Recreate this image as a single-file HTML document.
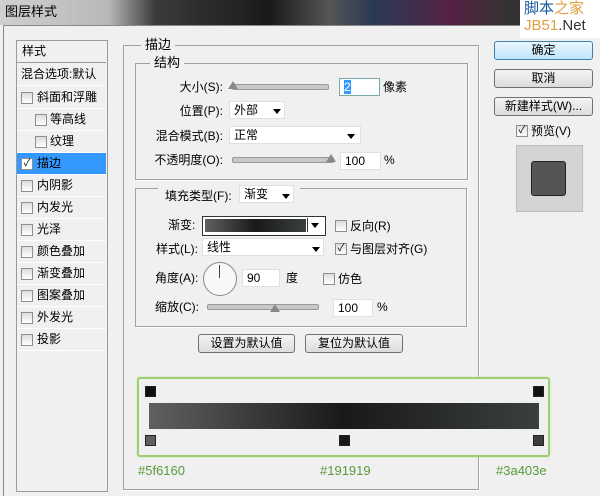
<!DOCTYPE html>
<html><head><meta charset="utf-8"><style>
body{margin:0;width:600px;height:495px;overflow:hidden;background:#f0f0f0;font-family:"Liberation Sans","Noto Sans CJK SC",sans-serif;font-size:12px;line-height:14px;color:#000;position:relative}
.a{position:absolute}
.cb{position:absolute;width:10px;height:10px;border:1px solid #8f8f8f;background:linear-gradient(#ddd,#fff)}
.row{position:absolute;left:17px;width:89px;height:21px;border-bottom:1px solid #fff;line-height:21px}
.grp{position:absolute;border:1px solid #a0a0a0;box-shadow:1px 1px 0 #fff}
.lg{position:absolute;background:#f0f0f0;padding:0 4px;line-height:14px;font-size:13px}
.in{position:absolute;background:#fff;border:1px solid #e0e0e0;height:18px;line-height:17px;padding-left:4px;box-sizing:border-box}
.btn{position:absolute;border:1px solid #707070;border-radius:3px;background:linear-gradient(#f4f4f4,#dcdcdc);text-align:center;line-height:16px;box-sizing:border-box}
.sl{position:absolute;height:4px;background:#c8c8c8;border:1px solid #999;border-radius:2px}
.th{position:absolute;width:0;height:0;border-left:5px solid transparent;border-right:5px solid transparent;border-bottom:8px solid #888}
.r{text-align:right}
.arr{position:absolute;width:0;height:0;border-left:4px solid transparent;border-right:4px solid transparent;border-top:5px solid #000}
.stop{position:absolute;width:9px;height:9px;background:#444;border:1px solid #222}
</style></head><body>
<div class="a" style="left:0;top:0;width:600px;height:25px;background:linear-gradient(90deg,#d0d0d0 0,#b8b8b8 18%,#3a3a3a 26%,#1a1a1a 45%,#555 55%,#2a3a55 62%,#552244 75%,#333 85%)"></div>
<div class="a" style="left:5px;top:5px;font-size:13px">图层样式</div>
<div class="a" style="left:520px;top:0;width:80px;height:38px;background:#fff;font-size:15px;line-height:17px;padding-left:4px;box-sizing:border-box"><span style="color:#1a5aa0">脚本</span><span style="color:#e0a040">之家</span><br><span style="color:#e0a040">JB51</span><span style="color:#333">.Net</span></div>
<div class="a" style="left:3px;top:25px;width:597px;height:470px;border-left:1px solid #888;border-top:1px solid #888;background:#f0f0f0;z-index:-1"></div>
<!-- left list -->
<div class="a" style="left:16px;top:40px;width:90px;height:450px;border:1px solid #9a9a9a;background:#f0f0f0"></div>
<div class="row" style="top:41px;padding-left:5px;width:84px;border-bottom:1px solid #999">样式</div>
<div class="row" style="top:64px;padding-left:4px;width:85px;white-space:nowrap;overflow:hidden">混合选项:默认</div>
<div class="row" style="top:87px"><div class="cb" style="left:4px;top:5px"></div><span class="a" style="left:20px">斜面和浮雕</span></div>
<div class="row" style="top:109px"><div class="cb" style="left:18px;top:5px"></div><span class="a" style="left:33px">等高线</span></div>
<div class="row" style="top:131px"><div class="cb" style="left:18px;top:5px"></div><span class="a" style="left:33px">纹理</span></div>
<div class="row" style="top:153px;background:#3399ff"><div class="cb" style="left:4px;top:5px;background:#fff;font-size:10px;line-height:10px;text-align:center">✓</div><span class="a" style="left:20px">描边</span></div>
<div class="row" style="top:175px"><div class="cb" style="left:4px;top:5px"></div><span class="a" style="left:20px">内阴影</span></div>
<div class="row" style="top:197px"><div class="cb" style="left:4px;top:5px"></div><span class="a" style="left:20px">内发光</span></div>
<div class="row" style="top:219px"><div class="cb" style="left:4px;top:5px"></div><span class="a" style="left:20px">光泽</span></div>
<div class="row" style="top:241px"><div class="cb" style="left:4px;top:5px"></div><span class="a" style="left:20px">颜色叠加</span></div>
<div class="row" style="top:263px"><div class="cb" style="left:4px;top:5px"></div><span class="a" style="left:20px">渐变叠加</span></div>
<div class="row" style="top:285px"><div class="cb" style="left:4px;top:5px"></div><span class="a" style="left:20px">图案叠加</span></div>
<div class="row" style="top:307px"><div class="cb" style="left:4px;top:5px"></div><span class="a" style="left:20px">外发光</span></div>
<div class="row" style="top:329px"><div class="cb" style="left:4px;top:5px"></div><span class="a" style="left:20px">投影</span></div>
<!-- groups -->
<div class="grp" style="left:123px;top:45px;width:354px;height:443px"></div>
<div class="lg" style="left:141px;top:38px">描边</div>
<div class="grp" style="left:135px;top:63px;width:331px;height:115px"></div>
<div class="lg" style="left:150px;top:56px">结构</div>
<div class="a r" style="left:140px;top:80px;width:83px">大小(S):</div>
<div class="sl" style="left:232px;top:84px;width:95px"></div><div class="th" style="left:228px;top:81px"></div>
<div class="in" style="left:339px;top:78px;width:41px;border-color:#7aa"><span style="background:#39f;color:#fff">2</span></div>
<div class="a" style="left:383px;top:80px">像素</div>
<div class="a r" style="left:140px;top:104px;width:83px">位置(P):</div>
<div class="in" style="left:229px;top:101px;width:56px">外部</div><div class="arr" style="left:273px;top:109px"></div>
<div class="a r" style="left:140px;top:129px;width:83px">混合模式(B):</div>
<div class="in" style="left:229px;top:126px;width:132px">正常</div><div class="arr" style="left:347px;top:134px"></div>
<div class="a r" style="left:140px;top:153px;width:83px">不透明度(O):</div>
<div class="sl" style="left:232px;top:157px;width:100px"></div><div class="th" style="left:326px;top:154px"></div>
<div class="in" style="left:340px;top:152px;width:41px">100</div>
<div class="a" style="left:384px;top:153px">%</div>
<div class="grp" style="left:135px;top:188px;width:330px;height:137px"></div>
<div class="a" style="left:158px;top:184px;width:142px;height:22px;background:#f0f0f0"></div>
<div class="a" style="left:165px;top:189px">填充类型(F):</div>
<div class="in" style="left:239px;top:185px;width:55px">渐变</div><div class="arr" style="left:282px;top:194px"></div>
<div class="a" style="left:168px;top:218px">渐变:</div>
<div class="a" style="left:202px;top:216px;width:122px;height:18px;border:1px solid #333;background:#fff"></div>
<div class="a" style="left:205px;top:219px;width:101px;height:13px;background:linear-gradient(90deg,#5f6160,#191919 50%,#3a403e)"></div>
<div class="a" style="left:307px;top:218px;width:15px;height:14px;border-left:1px solid #333"></div><div class="arr" style="left:311px;top:223px"></div>
<div class="cb" style="left:335px;top:220px"></div><div class="a" style="left:350px;top:219px">反向(R)</div>
<div class="a" style="left:156px;top:242px">样式(L):</div>
<div class="in" style="left:202px;top:238px;width:122px">线性</div><div class="arr" style="left:312px;top:247px"></div>
<div class="cb" style="left:335px;top:243px;font-size:10px;line-height:10px;text-align:center">✓</div><div class="a" style="left:350px;top:242px">与图层对齐(G)</div>
<div class="a" style="left:155px;top:271px">角度(A):</div>
<div class="a" style="left:203px;top:262px;width:32px;height:32px;border:1px solid #888;border-radius:50%;background:#f8f8f8"></div>
<div class="a" style="left:219px;top:265px;width:1px;height:13px;background:#444"></div>
<div class="in" style="left:242px;top:269px;width:38px">90</div>
<div class="a" style="left:286px;top:271px">度</div>
<div class="cb" style="left:323px;top:273px"></div><div class="a" style="left:338px;top:272px">仿色</div>
<div class="a" style="left:155px;top:300px">缩放(C):</div>
<div class="sl" style="left:207px;top:304px;width:110px"></div><div class="th" style="left:270px;top:304px"></div>
<div class="in" style="left:333px;top:299px;width:40px">100</div>
<div class="a" style="left:377px;top:300px">%</div>
<div class="btn" style="left:198px;top:334px;width:97px;height:19px">设置为默认值</div>
<div class="btn" style="left:305px;top:334px;width:98px;height:19px">复位为默认值</div>
<!-- gradient editor -->
<div class="a" style="left:137px;top:377px;width:409px;height:76px;border:2px solid #9ccf70;border-radius:3px;background:#f0f0f0;box-shadow:0 0 2px #c8e8a8"></div>
<div class="a" style="left:149px;top:403px;width:390px;height:26px;background:linear-gradient(90deg,#5f6160,#191919 50%,#3a403e)"></div>
<div class="stop" style="left:145px;top:386px;background:#111"></div>
<div class="stop" style="left:533px;top:386px;background:#111"></div>
<div class="stop" style="left:145px;top:435px;background:#5f6160"></div>
<div class="stop" style="left:339px;top:435px;background:#191919"></div>
<div class="stop" style="left:533px;top:435px;background:#3a403e"></div>
<div class="a" style="left:138px;top:464px;color:#5a9a3a;font-size:13px">#5f6160</div>
<div class="a" style="left:320px;top:464px;color:#5a9a3a;font-size:13px">#191919</div>
<div class="a" style="left:496px;top:464px;color:#5a9a3a;font-size:13px">#3a403e</div>
<!-- right -->
<div class="btn" style="left:494px;top:41px;width:99px;height:19px;border-color:#3c7fb1;background:linear-gradient(#eaf6fd,#bee6fd)">确定</div>
<div class="btn" style="left:494px;top:69px;width:99px;height:19px">取消</div>
<div class="btn" style="left:494px;top:97px;width:99px;height:19px">新建样式(W)...</div>
<div class="cb" style="left:516px;top:125px;font-size:10px;line-height:10px;text-align:center">✓</div><div class="a" style="left:531px;top:124px">预览(V)</div>
<div class="a" style="left:516px;top:145px;width:65px;height:65px;background:#d4d4d4;border:1px solid #bbb"></div>
<div class="a" style="left:531px;top:161px;width:33px;height:33px;background:#555;border:1px solid #222;border-radius:3px"></div>
</body></html>
